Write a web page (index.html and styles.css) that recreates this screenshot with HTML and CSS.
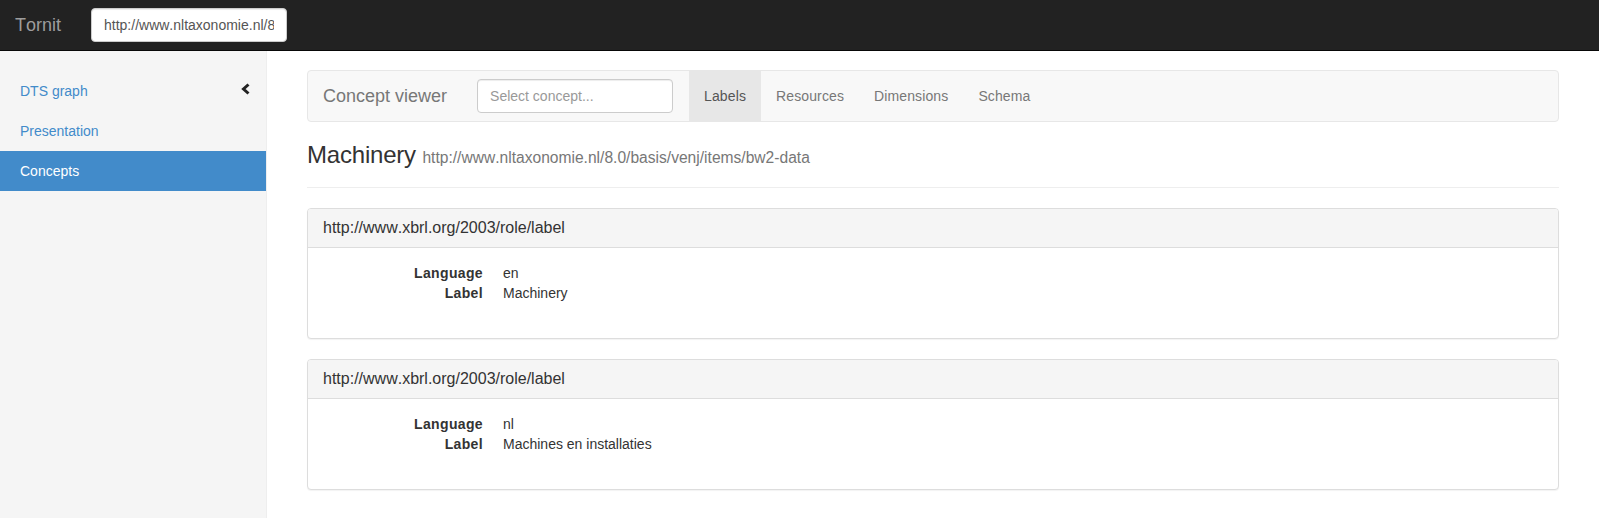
FILE: index.html
```html
<!DOCTYPE html>
<html lang="en">
<head>
<meta charset="utf-8">
<title>Tornit</title>
<link rel="stylesheet" href="styles.css">
</head>
<body>
<header class="topbar">
  <span class="topbar-brand">Tornit</span>
  <div class="topbar-form">
    <input class="form-input url-input" type="text" value="http://www.nltaxonomie.nl/8.0/basis/venj/items/bw2-data">
  </div>
</header>
<div class="layout">
  <nav class="sidebar">
    <ul class="side-nav">
      <li><a class="side-link" href="#">DTS graph<svg class="chevron" width="11" height="12" viewBox="0 0 11 12"><polyline points="8.5,1.5 3.5,6 8.5,10.5" fill="none" stroke="#222" stroke-width="3" stroke-linejoin="miter"/></svg></a></li>
      <li><a class="side-link" href="#">Presentation</a></li>
      <li><a class="side-link active" href="#">Concepts</a></li>
    </ul>
  </nav>
  <main class="main">
    <div class="viewer-bar">
      <span class="viewer-brand">Concept viewer</span>
      <div class="viewer-form">
        <input class="form-input concept-input" type="text" placeholder="Select concept...">
      </div>
      <ul class="viewer-tabs">
        <li><a class="tab active" href="#">Labels</a></li>
        <li><a class="tab" href="#">Resources</a></li>
        <li><a class="tab" href="#">Dimensions</a></li>
        <li><a class="tab" href="#">Schema</a></li>
      </ul>
    </div>
    <div class="page-header">
      <h3 class="concept-title">Machinery <small class="concept-uri">http://www.nltaxonomie.nl/8.0/basis/venj/items/bw2-data</small></h3>
    </div>
    <section class="panel">
      <div class="panel-heading">http://www.xbrl.org/2003/role/label</div>
      <div class="panel-body">
        <dl class="dl-horizontal">
          <dt>Language</dt><dd>en</dd>
          <dt>Label</dt><dd>Machinery</dd>
        </dl>
      </div>
    </section>
    <section class="panel">
      <div class="panel-heading">http://www.xbrl.org/2003/role/label</div>
      <div class="panel-body">
        <dl class="dl-horizontal">
          <dt>Language</dt><dd>nl</dd>
          <dt>Label</dt><dd>Machines en installaties</dd>
        </dl>
      </div>
    </section>
  </main>
</div>
</body>
</html>
```
FILE: styles.css
```css
* { box-sizing: border-box; }
html, body { margin: 0; padding: 0; }
body {
  font-family: "Liberation Sans", Arial, Helvetica, sans-serif;
  font-size: 14px;
  line-height: 20px;
  color: #333;
  background: #fff;
  overflow: hidden;
  font-kerning: none;
}
a { text-decoration: none; }
ul { list-style: none; margin: 0; padding: 0; }

.topbar {
  display: flex;
  align-items: flex-start;
  height: 51px;
  background: #222;
  border-bottom: 1px solid #080808;
}
.topbar-brand {
  padding: 15px;
  font-size: 18px;
  line-height: 20px;
  color: #9d9d9d;
}
.topbar-form { padding: 8px 15px; }

.form-input {
  display: block;
  width: 196px;
  height: 34px;
  padding: 6px 12px;
  font-family: "Liberation Sans", Arial, sans-serif;
  font-size: 14px;
  line-height: 20px;
  color: #555;
  background: #fff;
  border: 1px solid #ccc;
  border-radius: 4px;
  box-shadow: inset 0 1px 1px rgba(0,0,0,.075);
  outline: none;
  font-kerning: none;
}
.form-input::placeholder { color: #999; }

.layout {
  display: flex;
  min-height: calc(100vh - 51px);
}
.sidebar {
  flex: 0 0 267px;
  background: #f5f5f5;
  border-right: 1px solid #eee;
  padding-top: 20px;
}
.side-link {
  display: flex;
  justify-content: space-between;
  align-items: flex-start;
  padding: 10px 15px 10px 20px;
  color: #428bca;
}
.side-link.active {
  background: #428bca;
  color: #fff;
}
.chevron { margin-top: 2px; }

.main {
  flex: 1;
  padding: 19px 40px 0;
}
.viewer-bar {
  display: flex;
  align-items: flex-start;
  height: 52px;
  background: #f8f8f8;
  border: 1px solid #e7e7e7;
  border-radius: 4px;
  margin-bottom: 20px;
}
.viewer-brand {
  padding: 15px;
  font-size: 18px;
  line-height: 20px;
  color: #777;
}
.viewer-form { padding: 8px 15px; }
.viewer-tabs {
  display: flex;
  margin-left: 1px;
}
.tab {
  display: block;
  padding: 15px;
  line-height: 20px;
  color: #777;
  letter-spacing: 0.12px;
}
.tab.active {
  background: #e7e7e7;
  color: #555;
}

.page-header {
  padding-bottom: 19px;
  border-bottom: 1px solid #eee;
  margin-bottom: 20px;
}
.concept-title {
  margin: 0;
  font-size: 24px;
  line-height: 1.1;
  font-weight: normal;
  color: #333;
  letter-spacing: -0.2px;
}
.concept-uri {
  font-size: 65%;
  line-height: 1;
  color: #777;
  font-weight: normal;
  letter-spacing: 0;
}

.panel {
  background: #fff;
  border: 1px solid #ddd;
  border-radius: 4px;
  box-shadow: 0 1px 1px rgba(0,0,0,.05);
  margin-bottom: 20px;
}
.panel-heading {
  padding: 10px 15px;
  font-size: 16px;
  line-height: 1.1;
  background: #f5f5f5;
  border-bottom: 1px solid #ddd;
  border-radius: 3px 3px 0 0;
  color: #333;
}
.panel-body { padding: 15px; }
.dl-horizontal {
  display: grid;
  grid-template-columns: 160px 1fr;
  column-gap: 20px;
  margin: 0 0 20px;
}
.dl-horizontal dt {
  font-weight: bold;
  text-align: right;
  letter-spacing: 0.35px;
}
.dl-horizontal dd { margin: 0; }
```
